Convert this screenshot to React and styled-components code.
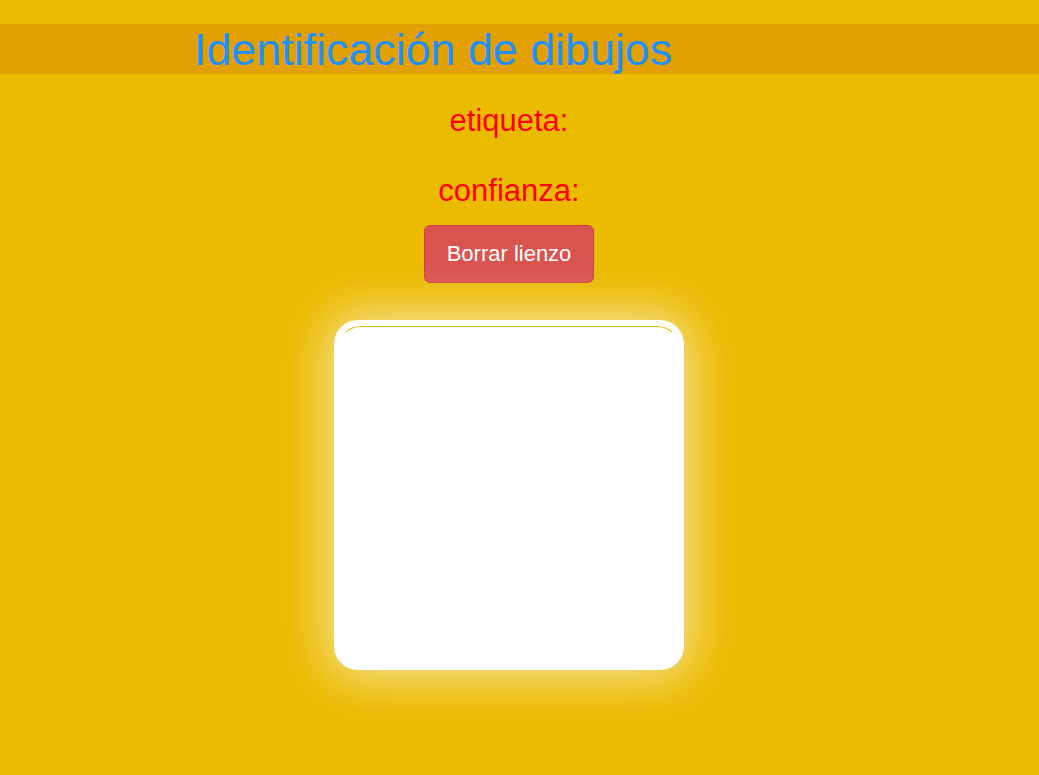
import React from 'react';
import styled, { createGlobalStyle } from 'styled-components';

const GlobalStyle = createGlobalStyle`
	html, body {
		margin: 0;
		padding: 0;
		background-color: #ebbb00;
		font-family: 'Liberation Sans', Arial, sans-serif;
	}

	body {
		min-height: 775px;
	}
`;

const Header = styled.header`
	margin-top: 24px;
	height: 50px;
	padding-left: 194px;
	background-color: #e2a000;
	display: flex;
	align-items: center;

	h1 {
		margin: 0;
		font-size: 44.8px;
		font-weight: normal;
		color: #1e90ff;
		line-height: 50px;
	}
`;

const Main = styled.main`
	padding-right: 21px;
	display: flex;
	flex-direction: column;
	align-items: center;
`;

const Label = styled.p`
	margin: ${props => props.$top}px 0 0;
	font-size: 31px;
	color: #ff0000;
	line-height: 36px;
`;

const ClearButton = styled.button`
	margin-top: 16px;
	padding: 0 22px;
	height: 58px;
	background-color: #d9534f;
	border: 1px solid #d43f3a;
	border-radius: 6px;
	font-family: 'Liberation Sans', Arial, sans-serif;
	font-size: 22px;
	color: #ffffff;
	cursor: pointer;
`;

const CanvasFrame = styled.div`
	margin-top: 37px;
	width: 350px;
	height: 350px;
	padding: 6px;
	box-sizing: border-box;
	background-color: #ffffff;
	border-radius: 24px;
	box-shadow: 0 0 50px 6px rgba(255, 255, 255, 0.65);
`;

const DrawingCanvas = styled.canvas`
	display: block;
	width: 100%;
	height: 100%;
	box-sizing: border-box;
	border: 1px solid #ffffff;
	border-top-color: #ebbb00;
	border-radius: 20px;
	background-color: #ffffff;
`;

const App = () => {
	return (
		<>
			<GlobalStyle />
			<Header>
				<h1>Identificación de dibujos</h1>
			</Header>

			<Main>
				<Label $top={29}>etiqueta:</Label>
				<Label $top={34}>confianza:</Label>

				<ClearButton>Borrar lienzo</ClearButton>

				<CanvasFrame>
					<DrawingCanvas width="336" height="336" />
				</CanvasFrame>
			</Main>
		</>
	);
};

export default App;
